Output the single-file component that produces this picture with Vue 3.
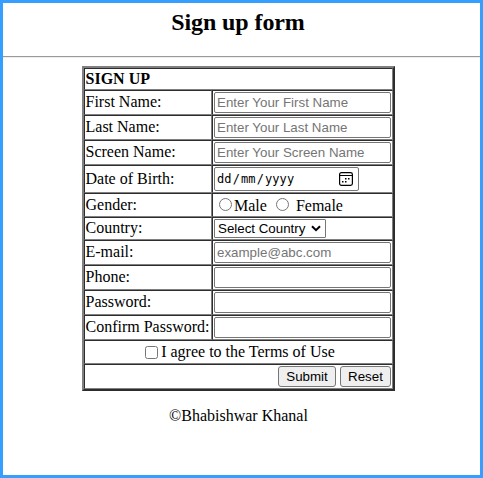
<script setup>
import { ref } from 'vue'

const nameRows = [
  { label: 'First Name:', placeholder: 'Enter Your First Name', type: 'text' },
  { label: 'Last Name:', placeholder: 'Enter Your Last Name', type: 'text' },
  { label: 'Screen Name:', placeholder: 'Enter Your Screen Name', type: 'text' }
]
const accountRows = [
  { label: 'E-mail:', placeholder: 'example@abc.com', type: 'text' },
  { label: 'Phone:', placeholder: '', type: 'text' },
  { label: 'Password:', placeholder: '', type: 'password' },
  { label: 'Confirm Password:', placeholder: '', type: 'password' }
]
const gender = ref('')
const agreed = ref(false)
</script>

<template>
  <div class="page">
    <h2 class="title">Sign up form</h2>
    <div class="rule"></div>
    <form class="form" @submit.prevent>
      <div class="cell full heading">SIGN UP</div>

      <template v-for="row in nameRows" :key="row.label">
        <div class="cell label">{{ row.label }}</div>
        <div class="cell"><input class="field" :type="row.type" :placeholder="row.placeholder" /></div>
      </template>

      <div class="cell label">Date of Birth:</div>
      <div class="cell">
        <div class="date">
          <span class="date-text">dd<span class="slash">/</span>mm<span class="slash">/</span>yyyy</span>
          <svg class="calendar" width="14" height="14" viewBox="0 0 14 14">
            <rect x="0.6" y="0.6" width="12.8" height="12.8" rx="1.8" fill="none" stroke="#000" stroke-width="1.2" />
            <path d="M1 3.5H13" stroke="#000" stroke-width="1" />
            <path d="M6 6h1.5v1.5h-1.5zM9 6h1.5v1.5h-1.5zM3 9h1.5v1.5h-1.5zM6 9h1.5v1.5h-1.5z" fill="#000" />
          </svg>
        </div>
      </div>

      <div class="cell label">Gender:</div>
      <div class="cell gender">
        <input v-model="gender" class="radio" type="radio" name="gender" value="male" />
        <span class="male">Male</span>
        <input v-model="gender" class="radio" type="radio" name="gender" value="female" />
        <span class="female">Female</span>
      </div>

      <div class="cell label">Country:</div>
      <div class="cell">
        <div class="select">
          <span>Select Country</span>
          <svg width="10" height="7" viewBox="0 0 10 7">
            <path d="M1 1.2L5 5.2L9 1.2" fill="none" stroke="#000" stroke-width="2" />
          </svg>
        </div>
      </div>

      <template v-for="row in accountRows" :key="row.label">
        <div class="cell label">{{ row.label }}</div>
        <div class="cell"><input class="field" :type="row.type" :placeholder="row.placeholder" /></div>
      </template>

      <label class="cell full terms">
        <input v-model="agreed" class="check" type="checkbox" />
        <span>I agree to the Terms of Use</span>
      </label>
      <div class="cell full actions">
        <button class="button submit" type="submit">Submit</button>
        <button class="button reset" type="reset">Reset</button>
      </div>
    </form>
    <div class="footer">©Bhabishwar Khanal</div>
  </div>
</template>

<style>
body {
  margin: 0;
  background: #fff;
}
</style>

<style scoped>
.page {
  box-sizing: border-box;
  width: 483px;
  height: 478px;
  border: 3px solid #359eff;
  display: flex;
  flex-direction: column;
  font: 16px/18px "Liberation Serif", "Times New Roman", serif;
  color: #000;
  overflow: hidden;
}
.title {
  margin: 6px 7px 0 0;
  height: 27px;
  font-size: 24px;
  line-height: 27px;
  font-weight: bold;
  letter-spacing: -0.1px;
  text-align: center;
}
.rule {
  height: 2px;
  box-sizing: border-box;
  margin-top: 20px;
  border-top: 1px solid #9a9a9a;
  border-bottom: 1px solid #eee;
}
.form {
  box-sizing: border-box;
  width: 313px;
  margin: 8px 0 0 79px;
  border: 2px solid;
  border-color: #808080 #2d2d2d #2d2d2d #808080;
  display: grid;
  grid-template-columns: 128px 181px;
  grid-template-rows: 22px 25px 25px 25px 28px 24px 23px 25px 25px 25px 25px 24px 25px;
}
.cell {
  box-sizing: border-box;
  min-width: 0;
  border: 1px solid;
  border-color: #2d2d2d #808080 #808080 #2d2d2d;
  padding: 1px;
  display: flex;
  align-items: center;
  white-space: nowrap;
}
.full {
  grid-column: 1 / 3;
}
.heading {
  padding-left: 0.5px;
  font-weight: bold;
}
.label {
  padding-left: 0.5px;
  padding-bottom: 2px;
}
.field {
  box-sizing: border-box;
  width: 177px;
  height: 21px;
  margin: 0;
  padding: 1px 2px;
  border: 1px solid #767676;
  border-radius: 2px;
  background: #fff;
  outline: none;
  font: 13.333px "Liberation Sans", Arial, sans-serif;
}
.field::placeholder {
  color: #757575;
}
.date {
  box-sizing: border-box;
  width: 145px;
  height: 24px;
  padding: 0 5px 0 2px;
  border: 1px solid #767676;
  border-radius: 2px;
  display: flex;
  align-items: center;
  justify-content: space-between;
}
.date-text {
  font: 12px/18px "DejaVu Sans Mono", monospace;
  letter-spacing: 0.1px;
}
.slash {
  padding: 0 1px;
}
.gender {
  padding: 2px 1px 0 6px;
}
.radio,
.check {
  width: 13px;
  height: 13px;
  margin: 0;
  flex: none;
}
.radio {
  margin-bottom: 4px;
}
.male {
  margin: 0 9px 0 2px;
}
.female {
  margin-left: 7px;
}
.select {
  box-sizing: border-box;
  width: 112px;
  height: 19px;
  padding: 0 4px 0 3px;
  border: 1px solid #767676;
  border-radius: 1px;
  display: flex;
  align-items: center;
  justify-content: space-between;
  font: 13.333px/17px "Liberation Sans", Arial, sans-serif;
}
.terms {
  justify-content: center;
  gap: 3px;
  padding-left: 4px;
}
.actions {
  justify-content: flex-end;
  gap: 4px;
}
.button {
  box-sizing: border-box;
  height: 21px;
  margin: 0;
  padding: 0;
  border: 1px solid #767676;
  border-radius: 3px;
  background: #efefef;
  color: #000;
  font: 13.333px "Liberation Sans", Arial, sans-serif;
}
.submit {
  width: 58px;
}
.reset {
  width: 51px;
}
.footer {
  margin: 16px 6px 0 0;
  text-align: center;
}
</style>
